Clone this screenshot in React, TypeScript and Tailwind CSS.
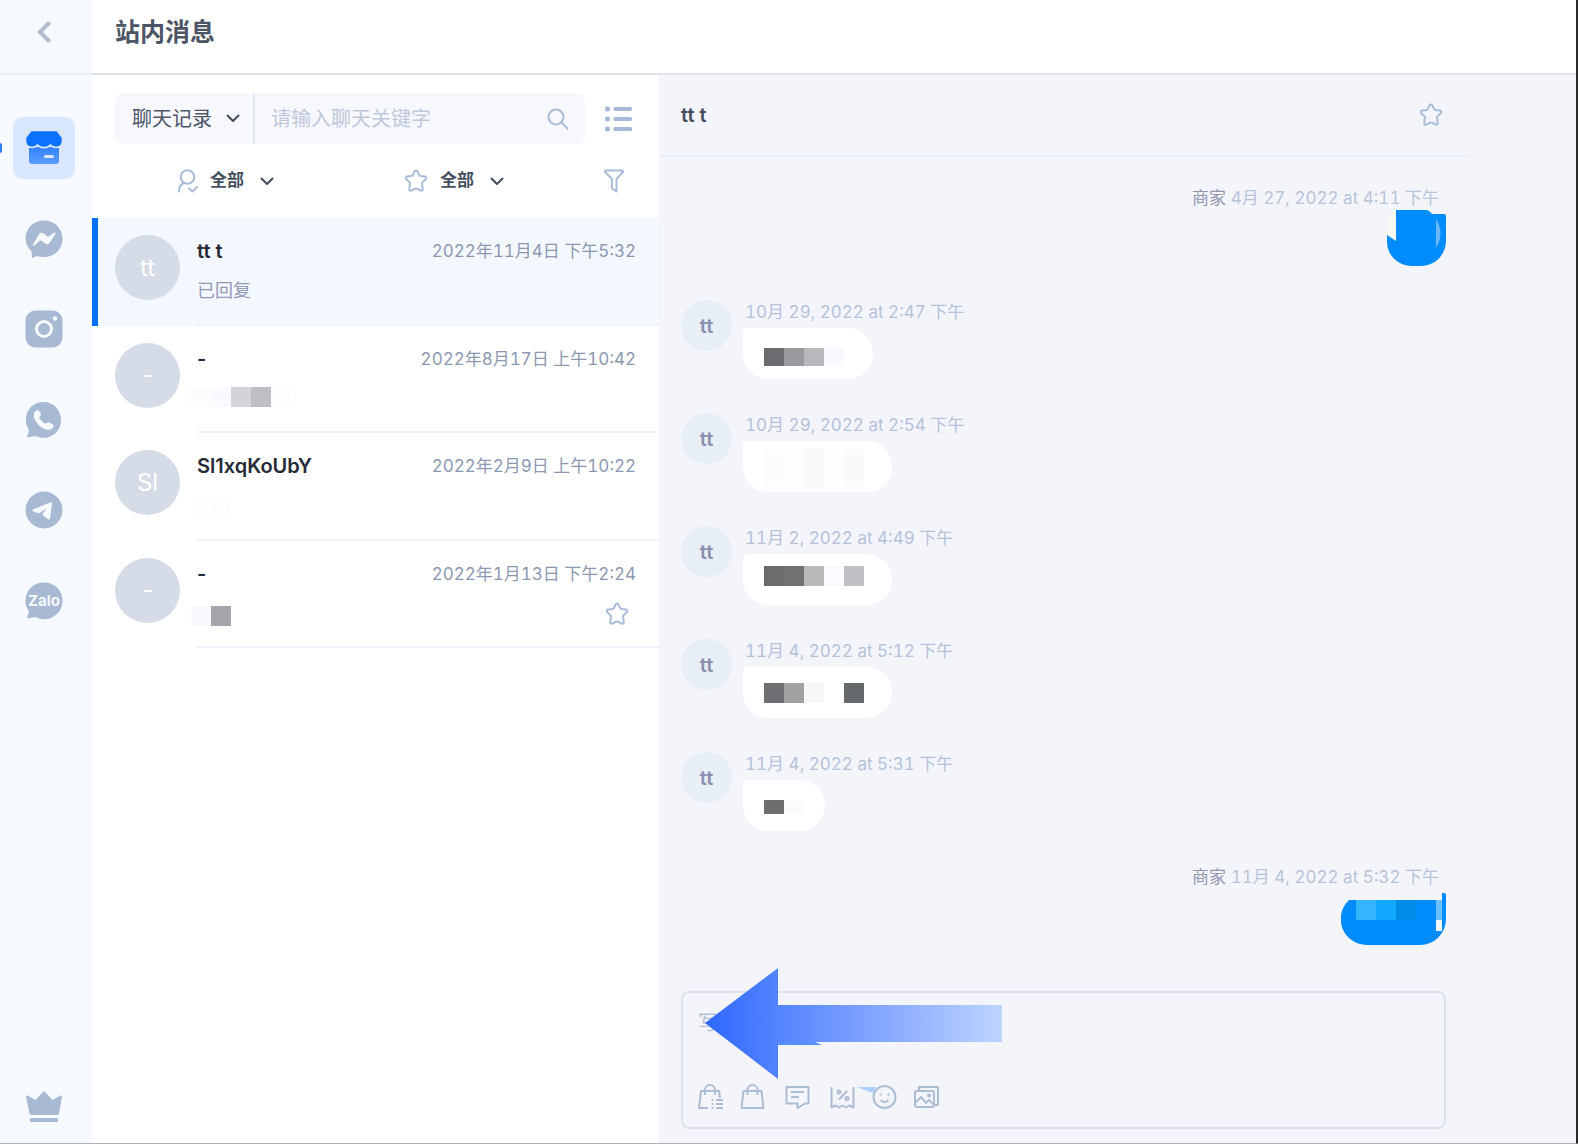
import type { ReactNode } from "react";
import clsx from "clsx";

interface Conversation {
  id: number;
  name: string;
  initials: string;
  time: string;
  preview?: string;
  blocks?: string[];
  offset?: string;
  active?: boolean;
  starred?: boolean;
}

interface Message {
  id: number;
  time: string;
  width: string;
  offset: string;
  blockHeight: string;
  blocks: string[];
}

const conversations: Conversation[] = [
  { id: 1, name: "tt t", initials: "tt", time: "2022年11月4日 下午5:32", preview: "已回复", active: true },
  {
    id: 2,
    name: "-",
    initials: "-",
    time: "2022年8月17日 上午10:42",
    offset: "pt-4",
    blocks: ["bg-[#fcfcfe]", "bg-[#f9faff]", "bg-[#d3d4d9]", "bg-[#bebfc4]", "bg-[#fdfdfd]"],
  },
  {
    id: 3,
    name: "Sl1xqKoUbY",
    initials: "Sl",
    time: "2022年2月9日 上午10:22",
    offset: "pt-5",
    blocks: ["bg-[#fefefc]", "bg-[#fcfefe]"],
  },
  {
    id: 4,
    name: "-",
    initials: "-",
    time: "2022年1月13日 下午2:24",
    offset: "pt-5",
    blocks: ["bg-[#f9faff]", "bg-[#a6a5ab]"],
    starred: true,
  },
];

const received: Message[] = [
  {
    id: 1,
    time: "10月 29, 2022 at 2:47 下午",
    width: "w-[130px]",
    offset: "pt-5",
    blockHeight: "h-[18px]",
    blocks: ["bg-[#6c6c70]", "bg-[#9b9a9f]", "bg-[#b8b8bc]", "bg-[#f8f9fe]"],
  },
  {
    id: 2,
    time: "10月 29, 2022 at 2:54 下午",
    width: "w-[149px]",
    offset: "pt-2",
    blockHeight: "h-[38px]",
    blocks: ["bg-[#fcfcfc]", "bg-[#fdfdfe]", "bg-[#f9f9fb]", "bg-[#fdfdfe]", "bg-[#f9fafc]"],
  },
  {
    id: 3,
    time: "11月 2, 2022 at 4:49 下午",
    width: "w-[149px]",
    offset: "pt-3",
    blockHeight: "h-5",
    blocks: ["bg-[#6c6c6e]", "bg-[#727274]", "bg-[#bababc]", "bg-[#fafbfe]", "bg-[#bfc0c3]"],
  },
  {
    id: 4,
    time: "11月 4, 2022 at 5:12 下午",
    width: "w-[149px]",
    offset: "pt-4",
    blockHeight: "h-5",
    blocks: ["bg-[#6f6e73]", "bg-[#a1a1a3]", "bg-[#f7f7f9]", "bg-white", "bg-[#646a6b]"],
  },
  {
    id: 5,
    time: "11月 4, 2022 at 5:31 下午",
    width: "w-[82px]",
    offset: "pt-5",
    blockHeight: "h-[14px]",
    blocks: ["bg-[#6e6e70]", "bg-[#fbfbfb]"],
  },
];

function Chevron() {
  return (
    <svg viewBox="0 0 14 9" className="pointer-events-none h-[9px] w-[14px] shrink-0 fill-none stroke-[#434d5e]" strokeWidth="2" strokeLinecap="round" strokeLinejoin="round">
      <path d="M1.500 1.500 7 7l5.500-5.500" />
    </svg>
  );
}

function StarIcon() {
  return (
    <svg viewBox="0 0 24 24" className="size-6 fill-none stroke-[#a9bcd8]" strokeWidth="2" strokeLinejoin="round">
      <path d="M10.7 2.200a1.500 1.500 0 0 1 2.600 0l1.900 3.900a1.500 1.500 0 0 0 1.100.8l4.600.7a1.500 1.500 0 0 1 .8 2.600l-3.300 3.200a1.500 1.500 0 0 0-.4 1.300l.8 5.200a1.500 1.500 0 0 1-2.200 1.600l-3.900-1.900a1.600 1.600 0 0 0-1.400 0l-3.900 1.900a1.500 1.500 0 0 1-2.200-1.600l.8-5.200a1.500 1.500 0 0 0-.4-1.300l-3.300-3.200a1.500 1.500 0 0 1 .8-2.600l4.600-.7a1.500 1.500 0 0 0 1.100-.8z" />
    </svg>
  );
}

function NavItem({ label, active, children }: { label: string; active?: boolean; children: ReactNode }) {
  return (
    <a
      href="#"
      aria-label={label}
      className={clsx("flex size-[62px] items-center justify-center rounded-[10px]", active && "bg-[#d9e7fe]")}
    >
      <svg viewBox="0 0 38 38" className="size-[38px] fill-[#a7b9d3]">{children}</svg>
    </a>
  );
}

function Sidebar() {
  return (
    <aside className="relative flex w-[92px] shrink-0 flex-col items-center bg-[#f6f9fd] pb-5">
      <div className="flex h-[75px] w-full items-center justify-center border-b-2 border-[#e9eff6] pr-1 pb-[10px]">
        <button type="button" aria-label="返回">
          <svg viewBox="0 0 14 22" className="h-[22px] w-[14px] fill-none stroke-[#b4bfd2]" strokeWidth="4" strokeLinecap="round" strokeLinejoin="round">
            <path d="M11.500 2.500 3 11l8.500 8.500" />
          </svg>
        </button>
      </div>
      <span className="absolute top-[143px] left-0 h-[10px] w-[2px] rounded-r-full bg-[#2d7ffb]" />

      <nav className="mt-[42px] flex h-[515px] flex-col justify-between pr-1">
        <NavItem label="店铺" active>
          <defs>
            <linearGradient id="shop" x1="0" y1="0" x2="0" y2="1">
              <stop offset="0" stopColor="#2f82ff" />
              <stop offset="1" stopColor="#5c9dff" />
            </linearGradient>
          </defs>
          <path fill="url(#shop)" d="M4 18h30v14a3 3 0 0 1-3 3H7a3 3 0 0 1-3-3z" />
          <path fill="#0a72ff" stroke="#d9e7fe" strokeWidth="1.600" d="M6 1.500h26l5.500 7v3.500c0 7-8.500 8-12 4-3 3.500-10 3.500-13 0-3.500 4-12 3-12-4V8.500z" />
          <rect x="19" y="26" width="10" height="3" rx="1.500" fill="#dfeaff" />
        </NavItem>
        <NavItem label="Messenger">
          <path d="M19 .5C8.500.5.500 8.300.500 18.500c0 5 2.200 9.500 6 12.700L7 38l5-2c2 .7 4.500 1 7 1 10.500 0 18.500-8 18.500-18.300S29.500.5 19 .5z" />
          <path className="fill-[#f6f9fd]" d="m8 24.500 6-10.300c1-1.600 3-2 4.500-.9l4 3.100c.4.300.9.300 1.300 0l5.200-3.700c.9-.7 2 .3 1.400 1.300l-5.600 8.700c-1 1.600-3 2-4.500.9l-4-3c-.4-.3-1-.3-1.400 0l-5.500 4.900c-.9.700-2-.1-1.400-1z" />
        </NavItem>
        <NavItem label="Instagram">
          <rect x=".5" y=".5" width="37" height="37" rx="10" />
          <circle cx="19" cy="19" r="7.500" fill="none" stroke="#f6f9fd" strokeWidth="3" />
          <circle cx="30" cy="8.500" r="2.200" fill="#f6f9fd" />
        </NavItem>
        <NavItem label="WhatsApp">
          <path d="M18.500 1C8.500 1 .8 8.700.8 18.500c0 4 1.200 7.500 3.200 10.300L2 36.500l8.500-1.500c2.500 1.200 5.200 1.800 8 1.800C28.500 36.800 36 29 36 19S28.500 1 18.500 1z" />
          <path className="fill-[#f6f9fd]" d="M9.500 11.500c1.200-2 3.300-3 4.500-1.500l1.800 2.800c.7 1.200-.9 2.600-1.500 3.500-.6 1 4.700 6.500 6.300 6.200 1-.2 2.400-1.800 3.800-1l3.500 2c1.400.9.700 2.800-.8 4-2.600 2-6.400 1.300-9.600-.6-4-2.400-7.500-6.500-8.500-10.600-.4-1.700-.3-3.300.5-4.800z" />
        </NavItem>
        <NavItem label="Telegram">
          <circle cx="19" cy="19" r="18.500" />
          <path className="fill-[#f6f9fd]" d="m8 18.500 17.500-7.200c1-.4 1.700.2 1.500 1.300l-2 14.900c-.2 1-1.200 1.300-2 .7l-5-4c-.6-.5-.7-1.200-.2-1.800l3.700-5-7 4.500c-.6.4-1.300.5-2 .2l-4.500-1.800c-.9-.4-.9-1.400 0-1.800z" />
        </NavItem>
        <NavItem label="Zalo">
          <path d="M19 .5C8.500.5.500 8.500.500 18.700c0 4 1.200 7.600 3.500 10.600L2 36.500l8.500-1.500c2.600 1.400 5.500 2.200 8.500 2.200 10.500 0 18.500-8.200 18.500-18.500S29.500.5 19 .5z" />
          <text x="19" y="24" textAnchor="middle" className="fill-[#f6f9fd] text-[15px] font-bold">Zalo</text>
        </NavItem>
      </nav>

      <a href="#" aria-label="会员" className="mt-auto mr-1">
        <svg viewBox="0 0 36 32" className="h-[32px] w-[36px] fill-[#a7b9d3]">
          <path d="M1.500 4.500 9.500 9 17 1q1-1 2 0l7.500 8 8-4.500q1.500-.5 1.500 1l-3 17q-.3 1.500-2 1.500H5.500q-1.700 0-2-1.500L0 5.500q0-1.500 1.500-1z" />
          <rect x="4" y="27" width="28" height="4" rx="1.500" />
        </svg>
      </a>
    </aside>
  );
}

function FilterSelect({ label, icon }: { label: string; icon: ReactNode }) {
  return (
    <div className="flex flex-1 items-center justify-center">
      {icon}
      <select aria-label={label} className="ml-3 w-[50px] appearance-none bg-transparent text-[17px] font-bold text-[#454f5e]">
        <option>全部</option>
      </select>
      <Chevron />
    </div>
  );
}

function ConversationRow({ item }: { item: Conversation }) {
  return (
    <li className={clsx("relative flex pl-[23px]", item.active && "bg-[#f3f8fe]")}>
      {item.active && <span className="absolute inset-y-0 left-0 w-[6px] bg-[#0070ff]" />}
      <div className="mt-[17px] flex size-[65px] shrink-0 items-center justify-center rounded-full bg-[#d6dbe8] text-2xl text-white">
        {item.initials}
      </div>
      <div className="ml-[17px] flex-1 border-b-2 border-[#eff2f8] pt-[21px] pr-[23px]">
        <div className="flex items-center justify-between">
          <h3 className="text-xl leading-6 font-semibold text-[#252a36]">{item.name}</h3>
          <time className="text-[17px] leading-6 text-[#8c98b2] tabular-nums">{item.time}</time>
        </div>
        <div className="flex items-start justify-between">
          {item.preview && <p className="pt-4 text-lg leading-6 text-[#939ab8]">{item.preview}</p>}
          {item.blocks && (
            <div className={clsx("-ml-[6px] flex", item.offset)}>
              {item.blocks.map((block, idx) => (
                <span key={idx} className={clsx("size-5", block)} />
              ))}
            </div>
          )}
          {item.starred && (
            <button type="button" aria-label="取消星标" className="mr-[7px] pt-4">
              <StarIcon />
            </button>
          )}
        </div>
      </div>
    </li>
  );
}

function ConversationPanel() {
  return (
    <section className="w-[567px] shrink-0 bg-white">
      <div className="flex items-center gap-5 pt-[18px] pr-[27px] pl-[23px]">
        <div className="flex h-[51px] min-w-0 flex-1 rounded-lg bg-[#f6f8fd]">
          <div className="flex w-[140px] shrink-0 items-center border-r-2 border-[#e1e6f0] pl-[17px]">
            <select aria-label="搜索范围" className="w-[94px] appearance-none bg-transparent text-xl text-[#4d5768]">
              <option>聊天记录</option>
            </select>
            <Chevron />
          </div>
          <input
            type="text"
            aria-label="搜索"
            placeholder="请输入聊天关键字"
            className="min-w-0 flex-1 bg-transparent pl-4 text-xl outline-none placeholder:text-[#bfc8da]"
          />
          <button type="button" aria-label="搜索" className="shrink-0 pr-4">
            <svg viewBox="0 0 22 22" className="size-[22px] fill-none stroke-[#a9bcd8]" strokeWidth="2" strokeLinecap="round">
              <circle cx="9" cy="9" r="7.500" />
              <path d="m14.500 14.500 6 6" />
            </svg>
          </button>
        </div>
        <button type="button" aria-label="列表" className="shrink-0">
          <svg viewBox="0 0 27 26" className="h-[26px] w-[27px] fill-[#a7b9d6]">
            {[1, 11, 21].map((y) => (
              <g key={y}>
                <rect x="0" y={y - 0.5} width="5" height="5" rx="2" />
                <rect x="8.500" y={y} width="18.500" height="4" rx="1.500" />
              </g>
            ))}
          </svg>
        </button>
      </div>

      <div className="flex h-[74px] items-center pl-5">
        <FilterSelect
          label="分配"
          icon={
            <svg viewBox="0 0 20 24" className="h-6 w-5 fill-none stroke-[#a9bcd8]" strokeWidth="2" strokeLinecap="round" strokeLinejoin="round">
              <circle cx="9.500" cy="8" r="6.800" />
              <path d="M6 14c-3.500 1.500-5 4.500-5 8.500M11 19.500l3.500 3 4.500-4.500" />
            </svg>
          }
        />
        <FilterSelect label="星标" icon={<StarIcon />} />
        <button type="button" aria-label="筛选" className="flex w-[91px] justify-center">
          <svg viewBox="0 0 20 24" className="h-6 w-5 fill-none stroke-[#a9bcd8]" strokeWidth="2" strokeLinejoin="round">
            <path d="M2 1.500h16c1 0 1.300 1 .7 1.800L12.500 10v12.500L8 19.500V10L1.300 3.300C.7 2.500 1 1.500 2 1.500z" />
          </svg>
        </button>
      </div>

      <ul className="grid h-[430px] grid-rows-4">
        {conversations.map((item) => (
          <ConversationRow key={item.id} item={item} />
        ))}
      </ul>
    </section>
  );
}

function ReceivedMessage({ message }: { message: Message }) {
  return (
    <div className="flex">
      <div className="flex size-[51px] items-center justify-center rounded-full bg-[#e8eef6] text-xl font-semibold text-[#8891af]">tt</div>
      <div className="ml-[11px]">
        <time className="block pl-[2px] text-[17px] leading-6 text-[#b3c3dc] tabular-nums">{message.time}</time>
        <div className={clsx("mt-1 flex h-[51px] rounded-[25px] rounded-tl-sm bg-white pl-[21px]", message.width, message.offset)}>
          {message.blocks.map((block, idx) => (
            <span key={idx} className={clsx("w-5", message.blockHeight, block)} />
          ))}
        </div>
      </div>
    </div>
  );
}

function SentMessage({ time, children }: { time: string; children: ReactNode }) {
  return (
    <div className="flex flex-col items-end">
      <p className="pr-[7px] text-[17px] leading-6 text-[#b8c4da] tabular-nums">
        <span className="text-[#9297b0]">商家</span> <time>{time}</time>
      </p>
      {children}
    </div>
  );
}

// pointer to the reply box
function GuideArrow() {
  return (
    <svg viewBox="0 0 298 126" className="pointer-events-none absolute -top-[26px] left-[22px] h-[126px] w-[298px]">
      <defs>
        <linearGradient id="guide" gradientUnits="userSpaceOnUse" x1="0" y1="0" x2="298" y2="0">
          <stop offset="0" stopColor="#2e67ff" />
          <stop offset="0.25" stopColor="#5484ff" />
          <stop offset="0.6" stopColor="#87a8ff" />
          <stop offset="1" stopColor="#bdd4ff" />
        </linearGradient>
      </defs>
      <path fill="url(#guide)" d="M0 56 73 1v37h224v37H73v37z" />
      <path fill="#5590ff" d="M73 75h37l7 3H73z" />
      <path fill="#acd0ff" d="m152 120 19 0-3 6z" />
    </svg>
  );
}

const tools = [
  {
    label: "订单",
    gap: "",
    icon: <path d="M10 24H1L3 7h18l1 7M7 11V6a5 5 0 0 1 10 0v5M13.500 16h2m2.500 0h7m-11.500 4h2m2.500 0h7m-11.500 4h2m2.500 0h7" />,
  },
  { label: "商品", gap: "ml-[17px]", icon: <path d="M3.500 7h18l2 17h-22zM7.500 11V6a5 5 0 0 1 10 0v5" /> },
  { label: "快捷回复", gap: "ml-5", icon: <path d="M1.500 3h22v16.500H20L12.500 24v-4.500h-11zM6 8h13M6 13h8" /> },
  {
    label: "优惠券",
    gap: "ml-5",
    icon: (
      <>
        <path d="M1.500 3v20.500l4-2 3.500 2 3.500-2 3.500 2 3.500-2 4 2V3M17 7l-8 8.500" />
        <circle cx="9" cy="8" r="1.500" />
        <circle cx="17" cy="14.500" r="1.500" />
      </>
    ),
  },
  {
    label: "表情",
    gap: "ml-[17px]",
    icon: (
      <>
        <circle cx="12.500" cy="13" r="11" />
        <path d="M8.500 9.500v2m8-2v2M8.500 16q4 4 8 0" />
      </>
    ),
  },
  {
    label: "图片",
    gap: "ml-[17px]",
    icon: (
      <>
        <rect x="1" y="7" width="19" height="16" rx="2" />
        <path d="M5 6V3h19v18h-3M2 18l5-5 5 6 3-3 4 4" />
        <circle cx="15" cy="11.500" r="1" />
      </>
    ),
  },
];

function Composer() {
  return (
    <div className="relative mt-[46px] h-[138px] rounded-lg border-2 border-[#dde2ee] pt-4 pl-[15px]">
      <textarea aria-label="回复" placeholder="写" className="block h-[58px] w-full resize-none bg-transparent text-xl leading-7 outline-none placeholder:text-[#b3c1d8]" />
      <div className="mt-[17px] flex">
        {tools.map((tool) => (
          <button key={tool.label} type="button" aria-label={tool.label} className={tool.gap}>
            <svg viewBox="0 0 25 26" className="h-[26px] w-[25px] fill-none stroke-[#acbdd6]" strokeWidth="2" strokeLinejoin="round">
              {tool.icon}
            </svg>
          </button>
        ))}
      </div>
      <GuideArrow />
    </div>
  );
}

function ChatPanel() {
  return (
    <section className="flex flex-1 flex-col bg-[#f3f5fa] pr-[107px]">
      <div className="flex h-[82px] items-center justify-between border-b-2 border-[#ebeff7] pr-[26px] pl-[22px]">
        <h2 className="text-xl font-semibold text-[#454f60]">tt t</h2>
        <button type="button" aria-label="星标">
          <StarIcon />
        </button>
      </div>

      <div className="mt-[29px] mr-[23px] mb-[14px] ml-[22px] flex flex-1 flex-col">
        <div className="flex flex-1 flex-col justify-between">
          <SentMessage time="4月 27, 2022 at 4:11 下午">
            <svg viewBox="0 0 60 56" className="h-[56px] w-[60px]">
              <path fill="#f7f8f6" d="M3 0h7v32L1 26z" />
              <path fill="#008cff" d="M10 0h31q3 1 5 4h12q2 0 2 2v25a25 25 0 0 1-25 25H26A25 24 0 0 1 1 32v-7l9 6z" />
              <path fill="#69b7ff" d="M50 9q9 14 0 29z" />
            </svg>
          </SentMessage>
          {received.map((message) => (
            <ReceivedMessage key={message.id} message={message} />
          ))}
          <SentMessage time="11月 4, 2022 at 5:32 下午">
            <svg viewBox="0 0 105 52" className="mt-1 h-[52px] w-[105px]">
              <path fill="#008cff" d="M8 7h93V0h2q2 0 2 2v24a26 26 0 0 1-26 26H26A26 26 0 0 1 8 7z" />
              <path fill="#33b5ff" d="M15 7h20v20H15z" />
              <path fill="#12a8ff" d="M35 7h20v20H35z" />
              <path fill="#008be6" d="M55 7h20v20H55z" />
              <path fill="#6bc0ff" d="M95 7h6v20h-6z" />
              <path fill="#f3f8ff" d="M95 27h6v11h-6z" />
            </svg>
          </SentMessage>
        </div>
        <Composer />
      </div>
    </section>
  );
}

export default function App() {
  return (
    <div className="flex min-h-screen border-r-2 border-b border-r-[#2b2b2d] border-b-[#aeb1b7] bg-white font-['Inter','Noto_Sans_CJK_SC',sans-serif]">
      <Sidebar />
      <div className="flex min-w-0 flex-1 flex-col">
        <header className="flex h-[75px] items-center border-b-2 border-[#dfe3ee] pb-[7px] pl-[23px]">
          <h1 className="text-[25px] font-bold text-[#4b5566]">站内消息</h1>
        </header>
        <main className="flex flex-1">
          <ConversationPanel />
          <ChatPanel />
        </main>
      </div>
    </div>
  );
}
